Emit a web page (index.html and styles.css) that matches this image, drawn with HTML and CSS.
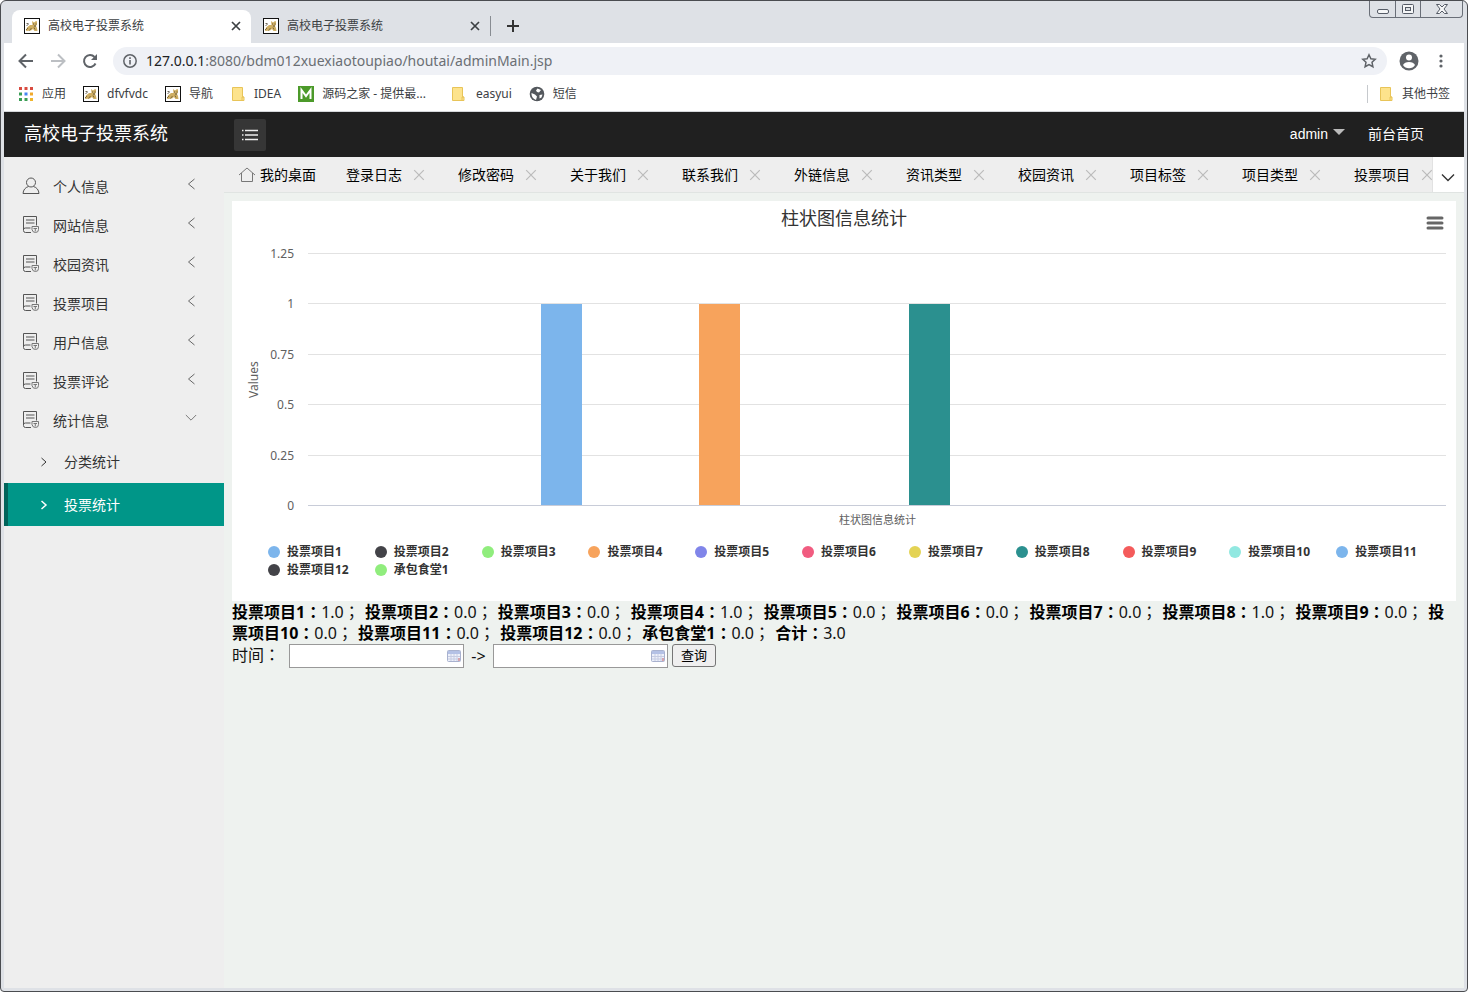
FILE: index.html
```html
<!DOCTYPE html>
<html lang="zh-CN">
<head>
<meta charset="utf-8">
<title>高校电子投票系统</title>
<link rel="stylesheet" href="styles.css">
</head>
<body>
<svg class="defs" aria-hidden="true">
  <symbol id="cat" viewBox="0 0 16 16"><rect x=".5" y=".5" width="15" height="15" fill="#fff" stroke="#111"/><path d="M2 13l1-3.500 3-2.500 2.500 0L8 3l2 1.500L12 3l1 .5v3L12 8l1 2 .5 3h-3L9 11l-2 1.500z" fill="#cfae62"/><path d="M2 12l2-2M5.500 12.500L7.500 10M11 11.500l-1-2" stroke="#7d6a3c" fill="none"/><path d="M9 6h1M11.500 6h1M10 8h2M2.500 7.500l2-1M2.500 5.500l2 0" stroke="#4a4230" stroke-width=".8" fill="none"/></symbol>
  <symbol id="folder" viewBox="0 0 16 16"><path d="M2.500 1.500h10v9.500h1.500v3.500h-11.500z" fill="#fde38c" stroke="#e8c458"/><path d="M12 14v-3h2" fill="none" stroke="#e8c458"/></symbol>
  <symbol id="x" viewBox="0 0 10 10"><path d="M1 1l8 8M9 1l-8 8" fill="none" stroke="currentColor" stroke-width="var(--w,1)"/></symbol>
  <symbol id="left" viewBox="0 0 12 12"><path d="M9.500 1l-6 5 6 5" fill="none" stroke="currentColor"/></symbol>
  <symbol id="down" viewBox="0 0 14 10"><path d="M1 1.500l6 6 6-6" fill="none" stroke="currentColor" stroke-width="var(--w,1)"/></symbol>
  <symbol id="right" viewBox="0 0 10 10"><path d="M2.500 1l4.500 4-4.500 4" fill="none" stroke="currentColor" stroke-width="var(--w,1)"/></symbol>
  <symbol id="doc" viewBox="0 0 18 18"><path d="M9 16.500H3.500q-2 0-2-2v-14h13v9M1.500 13.500q0-1.500 2-1.500h5M4 4h8.500M4 7h8.500" fill="none" stroke="#555"/><path d="M10 10.500h6.500v3q0 3-3 3t-3.500-3zM11.500 12.500h3.500M13.300 12.500v3" fill="none" stroke="#777"/></symbol>
  <symbol id="cal" viewBox="0 0 14 14"><rect x=".5" y="1.500" width="13" height="11" rx="1" fill="#edf0fa" stroke="#a9b2cf"/><path d="M1 2h12v3H1z" fill="#b4c1e5"/><path d="M1 7.500h12M1 10h12M4 5v7M7 5v7M10 5v7" stroke="#c6cce2" fill="none"/><path d="M11 9h2v3h-2z" fill="#d7a5ae"/></symbol>
</svg>
<div class="window">
  <header class="browser">
    <div class="tabstrip">
      <div class="btab active"><svg class="i16"><use href="#cat"/></svg><span>高校电子投票系统</span><button aria-label="关闭标签页"><svg class="i10 bold"><use href="#x"/></svg></button></div>
      <div class="btab"><svg class="i16"><use href="#cat"/></svg><span>高校电子投票系统</span><button aria-label="关闭标签页"><svg class="i10 bold"><use href="#x"/></svg></button></div>
      <button class="newtab" aria-label="新标签页"><svg width="12" height="12" viewBox="0 0 12 12"><path d="M6 0v12M0 6h12" stroke="#333" stroke-width="2"/></svg></button>
      <div class="winbtns">
        <button aria-label="最小化"><svg width="14" height="10" viewBox="0 0 14 10"><rect x="1.500" y="5.500" width="11" height="4" rx="1.500" fill="#f5f6f7" stroke="#555b66"/></svg></button>
        <button aria-label="最大化"><svg width="12" height="10" viewBox="0 0 12 10"><rect x=".5" y=".5" width="11" height="9" rx="1" fill="#f5f6f7" stroke="#555b66"/><rect x="3.500" y="3.500" width="5" height="3" fill="#dee1e6" stroke="#555b66"/></svg></button>
        <button aria-label="关闭"><svg width="12" height="10" viewBox="0 0 12 10"><path d="M.5.500h3L6 3 8.500.500h3L8 5l3.500 4.500h-3L6 7 3.500 9.500h-3L4 5z" fill="#f5f6f7" stroke="#555b66"/></svg></button>
      </div>
    </div>
    <div class="toolbar">
      <button aria-label="后退"><svg width="16" height="16" viewBox="0 0 16 16"><path d="M15 8H2M8 1.500L1.500 8 8 14.500" fill="none" stroke="#5f6368" stroke-width="2"/></svg></button>
      <button aria-label="前进"><svg width="16" height="16" viewBox="0 0 16 16"><path d="M1 8h13M8 1.500L14.500 8 8 14.500" fill="none" stroke="#bcbfc3" stroke-width="2"/></svg></button>
      <button aria-label="重新加载"><svg width="16" height="16" viewBox="0 0 16 16"><path d="M13.500 10.500A6 6 0 1 1 12.500 4" fill="none" stroke="#5f6368" stroke-width="2"/><path d="M15 1v6H9z" fill="#5f6368"/></svg></button>
      <div class="omnibox">
        <svg width="14" height="14" viewBox="0 0 14 14"><circle cx="7" cy="7" r="6.200" fill="none" stroke="#5f6368" stroke-width="1.500"/><path d="M7 6v4.500M7 3.300v1.600" stroke="#5f6368" stroke-width="1.600"/></svg>
        <span class="url"><b>127.0.0.1</b>:8080/bdm012xuexiaotoupiao/houtai/adminMain.jsp</span>
        <svg width="16" height="16" viewBox="0 0 16 16"><path d="M8 1.800l1.900 4 4.300.5-3.200 3 .9 4.400L8 11.500l-3.900 2.200.9-4.400-3.200-3 4.300-.5z" fill="none" stroke="#5f6368" stroke-width="1.500"/></svg>
      </div>
      <button class="user" aria-label="用户"><svg width="20" height="20" viewBox="0 0 20 20"><circle cx="10" cy="10" r="9.500" fill="#5f6368"/><circle cx="10" cy="6.500" r="3" fill="#fff"/><path d="M4 14q1.500-3 6-3t6 3q-2 3.200-6 3.200T4 14z" fill="#fff"/></svg></button>
      <button class="kebab" aria-label="菜单"><svg width="4" height="14" viewBox="0 0 4 14" fill="#5f6368"><circle cx="2" cy="2" r="1.600"/><circle cx="2" cy="7" r="1.600"/><circle cx="2" cy="12" r="1.600"/></svg></button>
    </div>
    <nav class="bookmarks">
      <a href="#" class="apps"><svg width="14" height="14" viewBox="0 0 14 14"><path d="M0 0h3v3H0zM5.500 0h3v3h-3zM11 0h3v3h-3z" fill="#d94b40"/><path d="M0 5.500h3v3H0z" fill="#3a9d55"/><path d="M5.500 5.500h3v3h-3z" fill="#4285f4"/><path d="M11 5.500h3v3h-3z" fill="#f0a92c"/><path d="M0 11h3v3H0zM5.500 11h3v3h-3z" fill="#3a9d55"/><path d="M11 11h3v3h-3z" fill="#f0b52c"/></svg>应用</a>
      <a href="#"><svg class="i16"><use href="#cat"/></svg>dfvfvdc</a>
      <a href="#"><svg class="i16"><use href="#cat"/></svg>导航</a>
      <a href="#"><svg class="i16"><use href="#folder"/></svg>IDEA</a>
      <a href="#"><svg width="16" height="16" viewBox="0 0 16 16"><path d="M0 0h16v16H0z" fill="#4c9a2a"/><path d="M3.500 13V4L8 10l4.500-6v9" fill="none" stroke="#fff" stroke-width="2"/></svg>源码之家 - 提供最...</a>
      <a href="#" class="wide"><svg class="i16"><use href="#folder"/></svg>easyui</a>
      <a href="#"><svg width="16" height="16" viewBox="0 0 16 16"><circle cx="8" cy="8" r="7.300" fill="#54585d"/><path d="M2.500 7l3.500 1.500 2 2-1 3.500Q2 12 2.500 7zM8.500 2.500l3.500 1.500-2 2.500L8 6 7 4.500zM10.500 9l3-.5-1 3-2 1z" fill="#fff"/></svg>短信</a>
      <a href="#" class="other"><svg class="i16"><use href="#folder"/></svg>其他书签</a>
    </nav>
  </header>

  <header class="apphead">
    <h1>高校电子投票系统</h1>
    <button class="toggle" aria-label="切换菜单"><svg width="18" height="12" viewBox="0 0 18 12"><path d="M4 1.500h13M4 6h13M4 10.500h13M1 1.500h1.500M1 6h1.500M1 10.500h1.500" stroke="#eee" stroke-width="1.300"/></svg></button>
    <a href="#" class="admin">admin<i></i></a>
    <a href="#">前台首页</a>
  </header>

  <div class="body">
    <nav class="side">
      <a href="#"><svg class="i18" viewBox="0 0 18 18"><circle cx="9" cy="5.500" r="4.500" fill="none" stroke="#555"/><path d="M6.500 9.500Q1.500 11 1 16.500h16Q16.500 11 11.500 9.500" fill="none" stroke="#555"/></svg><span>个人信息</span><svg class="chev"><use href="#left"/></svg></a>
      <a href="#"><svg class="i18"><use href="#doc"/></svg><span>网站信息</span><svg class="chev"><use href="#left"/></svg></a>
      <a href="#"><svg class="i18"><use href="#doc"/></svg><span>校园资讯</span><svg class="chev"><use href="#left"/></svg></a>
      <a href="#"><svg class="i18"><use href="#doc"/></svg><span>投票项目</span><svg class="chev"><use href="#left"/></svg></a>
      <a href="#"><svg class="i18"><use href="#doc"/></svg><span>用户信息</span><svg class="chev"><use href="#left"/></svg></a>
      <a href="#"><svg class="i18"><use href="#doc"/></svg><span>投票评论</span><svg class="chev"><use href="#left"/></svg></a>
      <a href="#"><svg class="i18"><use href="#doc"/></svg><span>统计信息</span><svg class="chev"><use href="#down"/></svg></a>
      <a href="#" class="sub"><svg class="i10"><use href="#right"/></svg><span>分类统计</span></a>
      <a href="#" class="sub current"><svg class="i10"><use href="#right"/></svg><span>投票统计</span></a>
    </nav>
    <main>
      <div class="tabbar">
        <div class="tabs">
          <div class="tab home"><svg width="16" height="16" viewBox="0 0 16 16"><path d="M0 8l8-7 8 7M2.500 6v8.500h11V6" fill="none" stroke="#777"/></svg>我的桌面</div>
          <div class="tab">登录日志<button aria-label="关闭"><svg class="i12"><use href="#x"/></svg></button></div>
          <div class="tab">修改密码<button aria-label="关闭"><svg class="i12"><use href="#x"/></svg></button></div>
          <div class="tab">关于我们<button aria-label="关闭"><svg class="i12"><use href="#x"/></svg></button></div>
          <div class="tab">联系我们<button aria-label="关闭"><svg class="i12"><use href="#x"/></svg></button></div>
          <div class="tab">外链信息<button aria-label="关闭"><svg class="i12"><use href="#x"/></svg></button></div>
          <div class="tab">资讯类型<button aria-label="关闭"><svg class="i12"><use href="#x"/></svg></button></div>
          <div class="tab">校园资讯<button aria-label="关闭"><svg class="i12"><use href="#x"/></svg></button></div>
          <div class="tab">项目标签<button aria-label="关闭"><svg class="i12"><use href="#x"/></svg></button></div>
          <div class="tab">项目类型<button aria-label="关闭"><svg class="i12"><use href="#x"/></svg></button></div>
          <div class="tab">投票项目<button aria-label="关闭"><svg class="i12"><use href="#x"/></svg></button></div>
        </div>
        <button class="more" aria-label="更多"><svg width="14" height="10"><use href="#down"/></svg></button>
      </div>
      <div class="page">
        <section class="chart">
          <h2>柱状图信息统计</h2>
          <button class="menu" aria-label="图表菜单"><svg width="18" height="14" viewBox="0 0 18 14"><path d="M2 2h14M2 7h14M2 12h14" stroke="#666" stroke-width="3" stroke-linecap="round"/></svg></button>
          <div class="plotrow">
            <div class="ytitle">Values</div>
            <div class="yaxis"><span>1.25</span><span>1</span><span>0.75</span><span>0.5</span><span>0.25</span><span>0</span></div>
            <div class="plot">
              <div class="grid"><i></i><i></i><i></i><i></i><i></i></div>
              <div class="bars">
                <i class="c1" style="height:80%"></i><i class="c2" style="height:0%"></i><i class="c3" style="height:0%"></i><i class="c4" style="height:80%"></i><i class="c5" style="height:0%"></i><i class="c6" style="height:0%"></i><i class="c7" style="height:0%"></i><i class="c8" style="height:80%"></i><i class="c9" style="height:0%"></i><i class="c10" style="height:0%"></i><i class="c1" style="height:0%"></i><i class="c2" style="height:0%"></i><i class="c3" style="height:0%"></i>
              </div>
            </div>
          </div>
          <div class="xlabel">柱状图信息统计</div>
          <ul class="legend">
            <li><i class="c1"></i>投票项目1</li><li><i class="c2"></i>投票项目2</li><li><i class="c3"></i>投票项目3</li><li><i class="c4"></i>投票项目4</li><li><i class="c5"></i>投票项目5</li><li><i class="c6"></i>投票项目6</li><li><i class="c7"></i>投票项目7</li><li><i class="c8"></i>投票项目8</li><li><i class="c9"></i>投票项目9</li><li><i class="c10"></i>投票项目10</li><li><i class="c1"></i>投票项目11</li><li><i class="c2"></i>投票项目12</li><li><i class="c3"></i>承包食堂1</li>
          </ul>
        </section>
        <p class="summary" lang="zh-TW"><span><b>投票项目1：</b>1.0；</span> <span><b>投票项目2：</b>0.0；</span> <span><b>投票项目3：</b>0.0；</span> <span><b>投票项目4：</b>1.0；</span> <span><b>投票项目5：</b>0.0；</span> <span><b>投票项目6：</b>0.0；</span> <span><b>投票项目7：</b>0.0；</span> <span><b>投票项目8：</b>1.0；</span> <span><b>投票项目9：</b>0.0；</span> <span><b>投票项目10：</b>0.0；</span> <span><b>投票项目11：</b>0.0；</span> <span><b>投票项目12：</b>0.0；</span> <span><b>承包食堂1：</b>0.0；</span> <span><b>合计：</b>3.0</span></p>
        <form class="query">
          <label for="from" lang="zh-TW">时间：</label>
          <div class="date"><input id="from" type="text"><svg width="14" height="14"><use href="#cal"/></svg></div>
          <label for="to">-&gt;</label>
          <div class="date"><input id="to" type="text"><svg width="14" height="14"><use href="#cal"/></svg></div>
          <button type="button">查询</button>
        </form>
      </div>
    </main>
  </div>
</div>
</body>
</html>
```
FILE: styles.css
```css
* { box-sizing: border-box; }
html, body { height: 100%; }
body { margin: 0; background: #fff; font: 14px/20px "Liberation Sans", "Noto Sans CJK SC", sans-serif; color: #333; }
a { color: inherit; text-decoration: none; }
button { border: 0; padding: 0; background: none; font: inherit; color: inherit; display: flex; align-items: center; justify-content: center; }
svg { flex: none; display: block; }
.defs { position: absolute; width: 0; height: 0; }
.i10 { width: 10px; height: 10px; }
.i12 { width: 12px; height: 12px; }
.i16 { width: 16px; height: 16px; }
.i18 { width: 18px; height: 18px; }
.bold { --w: 1.7; }

.window { min-height: 100%; display: flex; flex-direction: column; border: 1px solid #4a4c50; border-radius: 6px 6px 4px 4px; padding: 0 3px 3px; background: #dee1e6; overflow: hidden; }
.browser { font: 12px/18px "Noto Sans", "Noto Sans CJK SC", sans-serif; color: #3c4043; }

.tabstrip { display: flex; height: 42px; padding: 9px 0 0 8px; }
.btab { width: 239px; display: flex; align-items: center; gap: 8px; padding: 0 9px 2px 12px; }
.btab.active { background: #fff; border-radius: 8px 8px 0 0; }
.btab span { flex: 1; }
.btab button { width: 12px; height: 16px; }
.newtab { height: 20px; margin-top: 6px; padding: 0 16px; border-left: 1px solid #888c92; }
.winbtns { margin: -9px 1px 0 auto; display: flex; height: 17px; border: 1px solid #6a6f78; border-top: 0; border-radius: 0 0 4px 4px; }
.winbtns button { width: 25px; }
.winbtns button + button { border-left: 1px solid #6a6f78; }
.winbtns button:last-child { width: 42px; }

.toolbar { display: flex; align-items: center; height: 35px; gap: 16px; padding: 0 17px 0 14px; background: #fff; }
.omnibox { flex: 1; display: flex; align-items: center; gap: 9px; height: 28px; margin: 0 -4px 0 -1px; padding: 0 10px; border-radius: 14px; background: #eff1f6; }
.omnibox .url { flex: 1; font-size: 14px; color: #6b6f74; }
.omnibox b { font-weight: 400; color: #202124; }
.kebab { width: 12px; }

.bookmarks { display: flex; align-items: center; height: 34px; gap: 17px; padding: 0 14px 2px 15px; background: #fff; border-bottom: 1px solid #d5d7da; }
.bookmarks a { display: flex; align-items: center; gap: 8px; }
.bookmarks .apps { gap: 9px; }
.bookmarks .wide { margin-left: 7px; gap: 10px; }
.bookmarks .other { margin-left: auto; padding-left: 10px; border-left: 1px solid #c6c9cd; }

.apphead { display: flex; align-items: center; height: 45px; padding: 0 40px 0 20px; background: #202020; color: #fff; }
.apphead h1 { width: 210px; margin: 0; padding-bottom: 2px; font-size: 18px; line-height: 24px; font-weight: 400; }
.apphead a { padding-bottom: 2px; }
.toggle { width: 32px; height: 32px; border-radius: 2px; background: #363636; }
.admin { margin: 0 23px 0 auto; display: flex; align-items: center; gap: 5px; }
.admin i { margin-bottom: 4px; border: 6px solid transparent; border-top-color: #bbb; border-bottom: 0; }

.body { flex: 1; display: flex; }
.side { flex: none; width: 220px; padding-top: 10px; background: #eee; }
.side a { display: flex; align-items: center; height: 39px; padding: 0 27px 0 18px; gap: 13px; }
.side span { flex: 1; }
.side .i18 { margin-bottom: 2px; }
.chev { width: 12px; height: 12px; margin-bottom: 6px; color: #666; }
.side .sub { height: 43px; padding-left: 35px; gap: 15px; }
.side .current { padding-left: 31px; border-left: 4px solid #00635a; background: #009688; color: #fff; --w: 1.5; }

main { flex: 1; min-width: 0; background: #eef2ef; }
.tabbar { display: flex; height: 36px; background: #eee; border-bottom: 1px solid #e0e4e2; color: #000; }
.tabs { flex: 1; min-width: 0; display: flex; overflow: hidden; }
.tab { flex: none; display: flex; align-items: center; gap: 8px; padding: 0 15px; }
.home { gap: 5px; }
.tab button { width: 18px; height: 18px; color: #bbb; }
.more { width: 32px; padding: 6px 2px 0 0; background: #fff; color: #333; border-left: 1px solid #e2e2e2; --w: 1.4; }
.page { padding: 8px; }

.chart { position: relative; height: 400px; background: #fff; font: 12px/16px "Noto Sans", "Noto Sans CJK SC", sans-serif; color: #606060; }
.chart h2 { margin: 0; padding-top: 5px; text-align: center; font-size: 18px; line-height: 24px; font-weight: 400; color: #333; }
.menu { position: absolute; top: 15px; right: 12px; }
.plotrow { display: flex; height: 253px; margin-top: 23px; padding: 0 10px 0 14px; }
.ytitle { writing-mode: vertical-rl; transform: rotate(180deg); text-align: center; }
.yaxis { width: 32px; display: flex; flex-direction: column; justify-content: space-between; margin: -7px 14px -8px 0; text-align: right; }
.plot { flex: 1; display: grid; border-bottom: 1px solid #c8ccd8; }
.plot > div { grid-area: 1 / 1; display: grid; }
.grid i { border-top: 1px solid #e2e2e2; }
.plot > .bars { grid-template-columns: repeat(13, 1fr); align-items: end; justify-items: center; padding: 1px 20% 0; }
.bars i { width: 78%; }
.xlabel { margin: 6px 10px 0 77px; text-align: center; font-size: 11px; }
.legend { list-style: none; display: grid; grid-template-columns: repeat(11, 1fr); margin: 15px 13px 0 36px; padding: 0; font-weight: 700; line-height: 18px; color: #333; }
.legend li { display: flex; align-items: center; gap: 7px; white-space: nowrap; }
.legend i { width: 12px; height: 12px; border-radius: 50%; }
.c1 { background: #7cb5ec; }
.c2 { background: #434348; }
.c3 { background: #90ed7d; }
.c4 { background: #f7a35c; }
.c5 { background: #8085e9; }
.c6 { background: #f15c80; }
.c7 { background: #e4d354; }
.c8 { background: #2b908f; }
.c9 { background: #f45b5b; }
.c10 { background: #91e8e1; }

.summary, .query { font: 16px/21px "Noto Sans", "Noto Sans CJK TC", sans-serif; color: #111; }
.summary { margin: 0; padding: 1px 8px 0 0; }
.summary span { margin-right: 1px; }
.summary b { color: #000; }
.query { display: flex; align-items: center; height: 24px; }
.query label:first-child { width: 57px; padding-bottom: 2px; }
.date { position: relative; width: 175px; }
.date input { display: block; width: 100%; height: 24px; border: 1px solid #999; background: #fff; }
.date svg { position: absolute; top: 5px; right: 3px; }
.query .date + label { width: 29px; text-align: center; font-size: 16px; }
.query button { height: 23px; margin: 0 0 2px 4px; padding: 0 8px; border: 1px solid #767676; border-radius: 3px; background: #efefef; font-size: 13px; color: #000; }
```
